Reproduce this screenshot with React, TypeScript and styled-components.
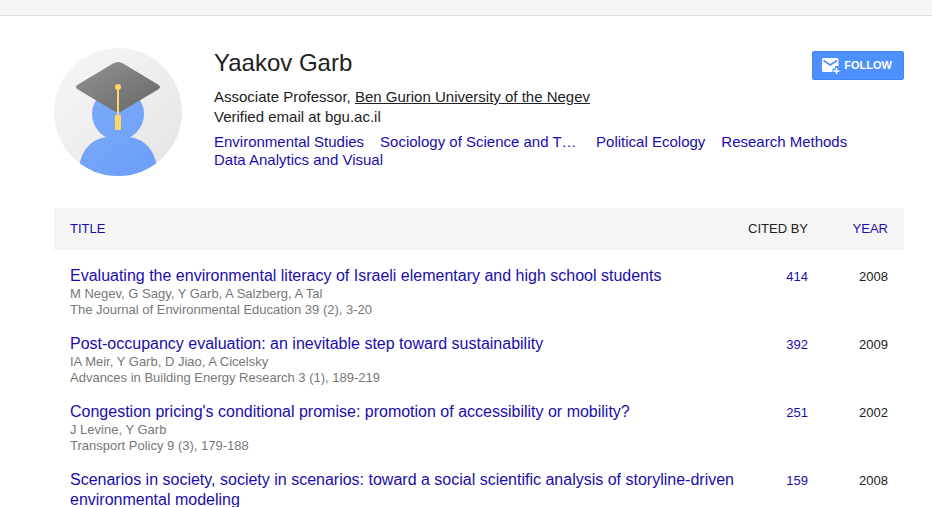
import React from "react";
import styled, { createGlobalStyle } from "styled-components";

const GlobalStyle = createGlobalStyle`
  html, body { height: 100%; }
  body {
    margin: 0;
    overflow: hidden;
    background: #fff;
    color: #222;
    font-family: "Liberation Sans", Arial, Helvetica, sans-serif;
    font-size: 13px;
  }
  a { color: #1a0dab; text-decoration: none; }
  a:hover { text-decoration: underline; }
`;

const TopBar = styled.header`
  height: 15px;
  background: #f5f5f5;
  border-bottom: 1px solid #e0e0e0;
`;

const Page = styled.main`
  padding: 32px 28px 0 54px;
`;

const Profile = styled.section`
  display: flex;
  align-items: flex-start;
  margin-bottom: 32px;
`;

const Avatar = styled.svg`
  flex: none;
  width: 128px;
  height: 128px;
  margin-right: 32px;
`;

const Info = styled.div`
  flex: 1;
  min-width: 0;
`;

const Heading = styled.div`
  display: flex;
  align-items: flex-start;
  justify-content: space-between;
`;

const Name = styled.h1`
  margin: 0 0 9px;
  font-size: 24px;
  line-height: 30px;
  font-weight: 400;
`;

const Line = styled.div`
  font-size: 15px;
  line-height: 20px;
`;

const Affiliation = styled.a`
  color: #222;
  text-decoration: underline;
`;

const Interests = styled.nav`
  display: flex;
  flex-wrap: wrap;
  column-gap: 16px;
  margin-top: 6px;
  font-size: 15px;
  line-height: 18px;
`;

const Interest = styled.a<{ $long?: boolean }>`
  width: ${(p) => (p.$long ? "200px" : "auto")};
  white-space: nowrap;
`;

const FollowButton = styled.button`
  flex: none;
  display: flex;
  align-items: center;
  height: 29px;
  margin-top: 3px;
  padding: 0 11px 0 8px;
  gap: 3px;
  border: 1px solid #4285f4;
  border-radius: 2px;
  background: #4d90fe;
  color: #fff;
  font: bold 11px/27px "Liberation Sans", Arial, sans-serif;
  cursor: pointer;
`;

const Table = styled.table`
  width: 100%;
  border-collapse: collapse;
  table-layout: fixed;
`;

const HeadCell = styled.th<{ $width?: string }>`
  width: ${(p) => p.$width ?? "auto"};
  height: 42px;
  padding: 0 16px 2px 0;
  box-sizing: border-box;
  background: #f5f5f5;
  font-size: 13px;
  font-weight: 400;
  text-align: right;
  white-space: nowrap;
  &:first-child {
    padding-left: 16px;
    text-align: left;
  }
`;

const TitleCell = styled.td`
  padding: 16px 0 0 16px;
  vertical-align: top;
`;

const NumberCell = styled.td`
  padding: 17px 16px 0 0;
  font-size: 13px;
  line-height: 20px;
  text-align: right;
  vertical-align: top;
`;

const PaperTitle = styled.a`
  display: block;
  font-size: 16px;
  line-height: 20px;
`;

const Detail = styled.div`
  color: #777;
  font-size: 13px;
  line-height: 16px;
`;

const papers = [
  {
    title: "Evaluating the environmental literacy of Israeli elementary and high school students",
    authors: "M Negev, G Sagy, Y Garb, A Salzberg, A Tal",
    venue: "The Journal of Environmental Education 39 (2), 3-20",
    cited: 414,
    year: 2008,
  },
  {
    title: "Post-occupancy evaluation: an inevitable step toward sustainability",
    authors: "IA Meir, Y Garb, D Jiao, A Cicelsky",
    venue: "Advances in Building Energy Research 3 (1), 189-219",
    cited: 392,
    year: 2009,
  },
  {
    title: "Congestion pricing's conditional promise: promotion of accessibility or mobility?",
    authors: "J Levine, Y Garb",
    venue: "Transport Policy 9 (3), 179-188",
    cited: 251,
    year: 2002,
  },
  {
    title:
      "Scenarios in society, society in scenarios: toward a social scientific analysis of storyline-driven environmental modeling",
    cited: 159,
    year: 2008,
  },
];

const interests = [
  { label: "Environmental Studies" },
  { label: "Sociology of Science and T…", long: true },
  { label: "Political Ecology" },
  { label: "Research Methods" },
  { label: "Data Analytics and Visual" },
];

function ScholarAvatar() {
  return (
    <Avatar viewBox="0 0 128 128" role="img" aria-label="Yaakov Garb">
      <defs>
        <clipPath id="disc">
          <circle cx="64" cy="64" r="64" />
        </clipPath>
        <linearGradient id="back" x1="0" y1="0" x2="1" y2="1">
          <stop offset="0.1" stopColor="#f5f5f5" />
          <stop offset="0.9" stopColor="#e6e6e6" />
        </linearGradient>
        <linearGradient id="body" gradientUnits="userSpaceOnUse" x1="30" y1="50" x2="100" y2="128">
          <stop offset="0" stopColor="#7baaf7" />
          <stop offset="1" stopColor="#6c9efa" />
        </linearGradient>
        <linearGradient id="cap" x1="0" y1="0" x2="1" y2="1">
          <stop offset="0.2" stopColor="#8a8a8a" />
          <stop offset="0.8" stopColor="#707070" />
        </linearGradient>
      </defs>
      <g clipPath="url(#disc)">
        <rect width="128" height="128" fill="url(#back)" />
        <circle cx="64" cy="66" r="26" fill="url(#body)" />
        <path
          d="M25 128C23 106 37 89 55 89H73C91 89 105 106 103 128Z"
          fill="url(#body)"
        />
        <path
          d="M59 15.500Q64 12.500 69 15.500L104 36.500Q108 39 104 41.500L69 62.500Q64 65.500 59 62.500L24 41.500Q20 39 24 36.500Z"
          fill="url(#cap)"
        />
        <g fill="#fdd663">
          <circle cx="64" cy="39" r="3" />
          <rect x="63" y="39" width="2" height="30" />
          <rect x="61" y="67" width="6" height="15" rx="1" />
        </g>
      </g>
    </Avatar>
  );
}

function MailPlusIcon() {
  return (
    <svg width="20" height="18" viewBox="0 0 20 18" aria-hidden="true">
      <path
        fill="#fff"
        d="M2.500 1H16Q17.500 1 17.500 2.500V9H14V11.500H11.500V15H2.500Q1 15 1 13.500V2.500Q1 1 2.500 1Z"
      />
      <path d="M2.500 3.500L9.300 8L16 3.500" fill="none" stroke="#4d90fe" strokeWidth="1.600" />
      <path d="M15.500 11V17M12.500 14H18.500" stroke="#fff" strokeWidth="1.600" />
    </svg>
  );
}

export default function App() {
  return (
    <>
      <GlobalStyle />
      <TopBar />
      <Page>
        <Profile>
          <ScholarAvatar />
          <Info>
            <Heading>
              <div>
                <Name>Yaakov Garb</Name>
                <Line>
                  Associate Professor, <Affiliation href="#">Ben Gurion University of the Negev</Affiliation>
                </Line>
                <Line>Verified email at bgu.ac.il</Line>
              </div>
              <FollowButton type="button">
                <MailPlusIcon />
                FOLLOW
              </FollowButton>
            </Heading>
            <Interests>
              {interests.map((i) => (
                <Interest key={i.label} href="#" $long={i.long}>
                  {i.label}
                </Interest>
              ))}
            </Interests>
          </Info>
        </Profile>
        <Table>
          <thead>
            <tr>
              <HeadCell scope="col"><a href="#">TITLE</a></HeadCell>
              <HeadCell scope="col" $width="88px">CITED BY</HeadCell>
              <HeadCell scope="col" $width="80px"><a href="#">YEAR</a></HeadCell>
            </tr>
          </thead>
          <tbody>
            {papers.map((p) => (
              <tr key={p.title}>
                <TitleCell>
                  <PaperTitle href="#">{p.title}</PaperTitle>
                  {p.authors && <Detail>{p.authors}</Detail>}
                  {p.venue && <Detail>{p.venue}</Detail>}
                </TitleCell>
                <NumberCell><a href="#">{p.cited}</a></NumberCell>
                <NumberCell>{p.year}</NumberCell>
              </tr>
            ))}
          </tbody>
        </Table>
      </Page>
    </>
  );
}
